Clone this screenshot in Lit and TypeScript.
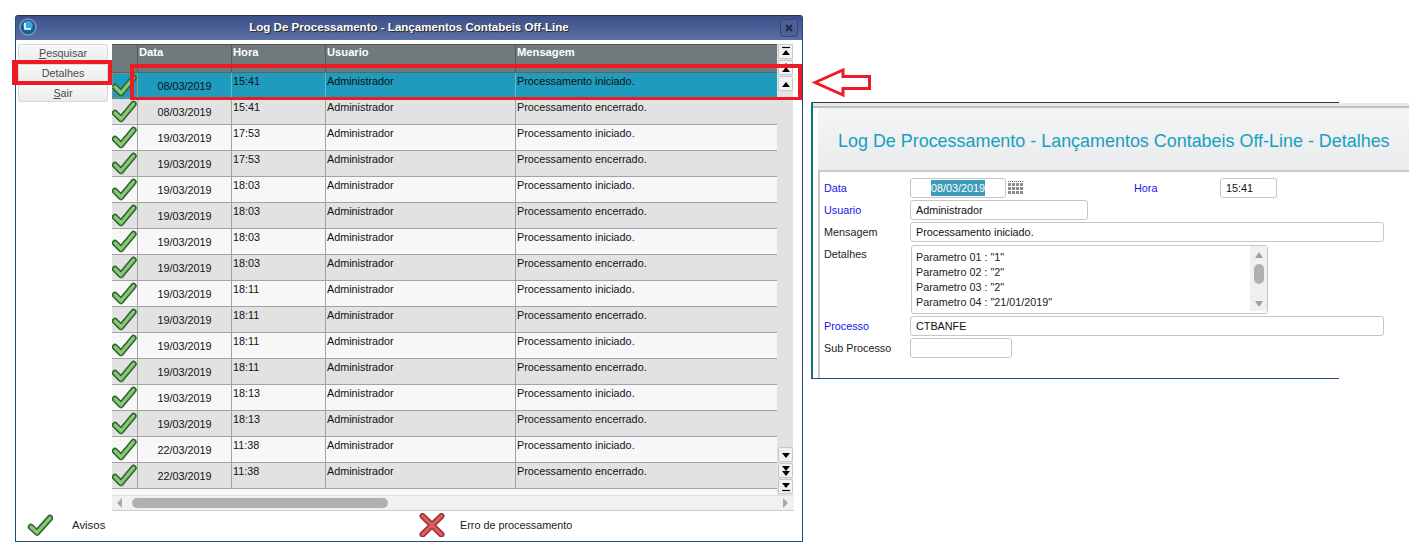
import { LitElement, html, css, svg } from "lit";
import { customElement } from "lit/decorators.js";

const rows: [string, string, string][] = [
  ["08/03/2019", "15:41", "Processamento iniciado."],
  ["08/03/2019", "15:41", "Processamento encerrado."],
  ["19/03/2019", "17:53", "Processamento iniciado."],
  ["19/03/2019", "17:53", "Processamento encerrado."],
  ["19/03/2019", "18:03", "Processamento iniciado."],
  ["19/03/2019", "18:03", "Processamento encerrado."],
  ["19/03/2019", "18:03", "Processamento iniciado."],
  ["19/03/2019", "18:03", "Processamento encerrado."],
  ["19/03/2019", "18:11", "Processamento iniciado."],
  ["19/03/2019", "18:11", "Processamento encerrado."],
  ["19/03/2019", "18:11", "Processamento iniciado."],
  ["19/03/2019", "18:11", "Processamento encerrado."],
  ["19/03/2019", "18:13", "Processamento iniciado."],
  ["19/03/2019", "18:13", "Processamento encerrado."],
  ["22/03/2019", "11:38", "Processamento iniciado."],
  ["22/03/2019", "11:38", "Processamento encerrado."],
];

const checkPath = "M4 14 L10 20 L22.5 5";
const check = () => html`<svg class="check" width="26" height="24" viewBox="0 0 26 24">
  <path d="${checkPath}" fill="none" stroke="#2c6632" stroke-width="6.4" stroke-linejoin="round" stroke-linecap="round"/>
  <path d="${checkPath}" fill="none" stroke="#8ac873" stroke-width="3.2" stroke-linejoin="miter" stroke-linecap="round"/>
</svg>`;

const tri = (up: boolean, y: number) =>
  up ? svg`<path d="M3 ${y + 5} L7 ${y} L11 ${y + 5}Z"/>` : svg`<path d="M3 ${y} L7 ${y + 5} L11 ${y}Z"/>`;

const sbtn = (content: unknown) =>
  html`<div class="sbtn"><svg width="14" height="14" viewBox="0 0 14 14">${content}</svg></div>`;

@customElement("app-root")
export class AppRoot extends LitElement {
  static styles = css`
    :host {
      display: block;
      position: relative;
      width: 1409px;
      height: 550px;
      background: #fff;
      overflow: hidden;
      font-family: "Liberation Sans", Arial, sans-serif;
      font-size: 10.8px;
      color: #1a1a1a;
    }
    .page { display: flex; align-items: flex-start; padding-left: 15px; gap: 8px; }
    .win {
      margin-top: 15px;
      width: 788px;
      height: 527px;
      box-sizing: border-box;
      border: 1px solid #1f4e7c;
      border-top-color: #333;
      border-radius: 3px 3px 0 0;
      display: flex;
      flex-direction: column;
      flex: none;
    }
    .title {
      height: 24px;
      flex: none;
      box-sizing: border-box;
      padding-bottom: 2px;
      background: linear-gradient(#3c4f88, #5b70a6);
      display: flex;
      align-items: center;
      justify-content: center;
      position: relative;
      color: #fff;
      font-weight: bold;
      font-size: 11.55px;
      text-shadow: 1px 1px 1px #222;
    }
    .logo { position: absolute; left: 3px; top: 2px; }
    .close {
      position: absolute;
      right: 4px;
      top: 3px;
      width: 18px;
      height: 18px;
      box-sizing: border-box;
      border: 1px solid #34477c;
      border-radius: 3px;
      background: #4d6198;
      display: flex;
      align-items: center;
      justify-content: center;
    }
    .body { display: flex; padding: 4px 0 0 2px; flex: none; height: 467px; }
    .side { width: 90px; flex: none; display: flex; flex-direction: column; gap: 2px; margin-right: 4px; }
    .btn {
      height: 18px;
      box-sizing: border-box;
      border: 1px solid #d8d8d8;
      border-radius: 2px;
      background: linear-gradient(#f8f8f8, #ececec);
      text-align: center;
      line-height: 16px;
      color: #4a4a4a;
    }
    .btn u { text-decoration: underline; }
    .gridwrap { width: 682px; flex: none; display: flex; flex-direction: column; }
    .grid { height: 451px; flex: none; display: flex; }
    .table { width: 665px; flex: none; background: #f7f7f7; }
    .head, .row { display: grid; grid-template-columns: 26px 94px 94px 190px 261px; }
    .head {
      height: 29px;
      background: #6e7a7c;
      color: #fff;
      font-weight: bold;
      font-size: 11.2px;
      border-top: 1px solid #555;
      box-sizing: border-box;
      border-bottom: 1px solid #5a6466;
    }
    .head div { border-right: 1px solid #4f5a5c; padding: 1px 0 0 1px; }
    .head div:last-child { border-right: 0; }
    .row {
      height: 26px;
      box-sizing: border-box;
      border-bottom: 1px solid #a3a3a3;
      background: #f7f7f7;
      color: #111;
      overflow: hidden;
    }
    .row:nth-child(odd) { background: #e2e2e2; }
    .row.sel { background: #1e9bbd; border-bottom-color: #1e9bbd; }
    .row .c { border-right: 1px solid #a3a3a3; padding: 2px 0 0 1px; line-height: 13px; }
    .row .c:last-child { border-right: 0; }
    .row.sel .c { border-right-color: #5fb9d2; }
    .row .ic { padding: 0; overflow: hidden; }
    .row.sel .ic { outline: 1px dotted #d9803c; outline-offset: -1px; }
    .row .d { text-align: center; padding: 7px 0 0 0; }
    .check { display: block; margin-left: -1px; margin-top: 0; }
    .vbar {
      width: 16px;
      flex: none;
      box-sizing: border-box;
      background: #e2e2e2;
      display: flex;
      flex-direction: column;
      padding-left: 1px;
      justify-content: space-between;
    }
    .vgroup { display: flex; flex-direction: column; }
    .sbtn {
      width: 15px;
      height: 15px;
      box-sizing: border-box;
      background: #f2f2f2;
      border: 1px solid #c8c8c8;
      border-radius: 2px;
      margin-bottom: 1px;
      display: flex;
      align-items: center;
      justify-content: center;
    }
    .sbtn svg { display: block; flex: none; }
    .hbar {
      height: 16px;
      background: #f1f1f1;
      border-top: 1px solid #e0e0e0;
      border-bottom: 1px solid #ccc;
      box-sizing: border-box;
      display: flex;
      align-items: center;
      gap: 9px;
      padding: 0 5px;
      flex: none;
    }
    .hthumb { width: 256px; height: 10px; border-radius: 5px; background: #b0b0b0; }
    .hspace { flex: 1; }
    .legend { display: flex; align-items: center; height: 28px; flex: none; color: #222; }
    .legend svg { display: block; flex: none; }
    .lg1 { margin-left: 11px; }
    .lt1 { margin-left: 19px; width: 347px; font-size: 11.4px; }
    .lt2 { margin-left: 15px; }

    .win2 {
      margin-top: 102px;
      width: 528px;
      height: 277px;
      box-sizing: border-box;
      border-left: 2px solid #0f6f86;
      border-bottom: 1px solid #1f4e7c;
      flex: none;
      display: flex;
      flex-direction: column;
    }
    .win2top { height: 1px; background: #333; flex: none; }
    .strip {
      height: 5px;
      width: 598px;
      box-sizing: border-box;
      background: #e6e9ea;
      border-bottom: 2px solid #bcc1c5;
      flex: none;
    }
    .banner {
      height: 64px;
      flex: none;
      margin-left: 5px;
      background: linear-gradient(#f4f5f5, #eaebed);
      border-bottom: 2px solid #c8c8c8;
      color: #16a0c2;
      font-size: 17.93px;
      display: flex;
      align-items: center;
      padding: 4px 0 0 20px;
      white-space: nowrap;
      width: 600px;
      box-sizing: border-box;
    }
    .form {
      flex: 1;
      margin-left: 5px;
      border-left: 2px solid #c8c8c8;
      padding: 6px 0 0 4px;
      color: #222;
      display: flex;
      flex-direction: column;
      gap: 2px;
    }
    .fr { display: flex; height: 20px; align-items: center; }
    .lab { width: 86px; flex: none; }
    .blue { color: #1414e6; }
    .inp {
      box-sizing: border-box;
      height: 20px;
      border: 1px solid #c6c6c6;
      border-radius: 3px;
      padding-left: 5px;
      line-height: 18px;
      background: #fff;
      color: #111;
      flex: none;
    }
    .date { width: 96px; text-align: center; padding-left: 0; }
    .date span { background: #3d9cb8; color: #fff; padding: 2px 0; }
    .cal { margin-left: 2px; display: block; flex: none; }
    .hl { margin-left: 110px; width: 86px; flex: none; }
    .time { width: 57px; }
    .usr { width: 178px; }
    .msg { width: 474px; }
    .sub { width: 102px; }
    .fr.tall { height: 69px; align-items: flex-start; margin-top: 1px; }
    .tall .lab { padding-top: 3px; }
    .area {
      box-sizing: border-box;
      width: 357px;
      height: 69px;
      margin-left: 1px;
      border: 1px solid #c6c6c6;
      border-radius: 3px;
      padding: 4px 0 0 4px;
      line-height: 15px;
      display: flex;
      justify-content: space-between;
      flex: none;
    }
    .vs {
      width: 17px;
      height: 65px;
      margin-top: -4px;
      background: #f0f0f0;
      display: flex;
      flex-direction: column;
      align-items: center;
      padding-top: 6px;
      box-sizing: border-box;
    }
    .vs svg { display: block; flex: none; }
    .vs .t { width: 10px; height: 20px; border-radius: 5px; background: #b0b0b0; margin: 6px 0 17px; flex: none; }

    .red { position: absolute; box-sizing: border-box; border: 4px solid #ed1c24; pointer-events: none; }
    .red1 { left: 12px; top: 60px; width: 100px; height: 25px; border-left-width: 6px; }
    .red2 { left: 130px; top: 64px; width: 672px; height: 36px; border-bottom-width: 3px; }
    .arrow { position: absolute; left: 812px; top: 67px; }
  `;

  render() {
    return html`
      <div class="page">
        <div class="win">
          <div class="title">
            <svg class="logo" width="18" height="18" viewBox="0 0 18 18">
              <circle cx="9" cy="9" r="8.8" fill="#8093b8"/>
              <circle cx="9" cy="9" r="7.3" fill="#155f9c"/>
              <circle cx="9" cy="7.5" r="4.6" fill="#3fa3dc"/>
              <path d="M6 5v6h6" fill="none" stroke="#fff" stroke-width="1.6"/>
            </svg>
            <span>Log De Processamento - Lançamentos Contabeis Off-Line</span>
            <div class="close">
              <svg width="8" height="8" viewBox="0 0 8 8"><path d="M1 1L7 7M7 1L1 7" stroke="#1f2a44" stroke-width="2.2"/></svg>
            </div>
          </div>
          <div class="body">
            <div class="side">
              <div class="btn"><u>P</u>esquisar</div>
              <div class="btn">Detalhes</div>
              <div class="btn"><u>S</u>air</div>
            </div>
            <div class="gridwrap">
              <div class="grid">
                <div class="table">
                  <div class="head"><div></div><div>Data</div><div>Hora</div><div>Usuario</div><div>Mensagem</div></div>
                  ${rows.map(
                    (r, i) => html`<div class="row ${i === 0 ? "sel" : ""}">
                      <div class="c ic">${check()}</div>
                      <div class="c d">${r[0]}</div>
                      <div class="c">${r[1]}</div>
                      <div class="c">Administrador</div>
                      <div class="c">${r[2]}</div>
                    </div>`
                  )}
                </div>
                <div class="vbar">
                  <div class="vgroup">
                    ${sbtn(svg`<path d="M3 2.5H11" stroke="#000" stroke-width="1.2"/>${tri(true, 5)}`)}
                    ${sbtn(svg`${tri(true, 2)}${tri(true, 6)}`)}
                    ${sbtn(tri(true, 5))}
                  </div>
                  <div class="vgroup">
                    ${sbtn(tri(false, 5))}
                    ${sbtn(svg`${tri(false, 2)}${tri(false, 7)}`)}
                    ${sbtn(svg`${tri(false, 3)}<path d="M3 10.5H11" stroke="#000" stroke-width="1.2"/>`)}
                  </div>
                </div>
              </div>
              <div class="hbar">
                <svg width="6" height="10" viewBox="0 0 6 10"><path d="M5 0V10L0 5Z" fill="#a8a8a8"/></svg>
                <div class="hthumb"></div>
                <div class="hspace"></div>
                <svg width="6" height="10" viewBox="0 0 6 10"><path d="M0 0V10L5 5Z" fill="#a8a8a8"/></svg>
              </div>
            </div>
          </div>
          <div class="legend">
            <svg class="lg1" width="26" height="24" viewBox="0 0 26 24">
              <path d="M4 14 L10 19.5 L23 5" fill="none" stroke="#2c6632" stroke-width="6.4" stroke-linecap="round" stroke-linejoin="round"/>
              <path d="M4 14 L10 19.5 L23 5" fill="none" stroke="#8ac873" stroke-width="3.2" stroke-linecap="round"/>
            </svg>
            <span class="lt1">Avisos</span>
            <svg width="26" height="24" viewBox="0 0 26 24">
              <path d="M3.5 3 L22.5 21.5 M22.5 3 L3.5 21.5" fill="none" stroke="#8f2f33" stroke-width="6" stroke-linecap="round"/>
              <path d="M3.5 3 L22.5 21.5 M22.5 3 L3.5 21.5" fill="none" stroke="#e0575c" stroke-width="3.2" stroke-linecap="round"/>
            </svg>
            <span class="lt2">Erro de processamento</span>
          </div>
        </div>
        <div class="win2">
          <div class="win2top"></div>
          <div class="strip"></div>
          <div class="banner">Log De Processamento - Lançamentos Contabeis Off-Line - Detalhes</div>
          <div class="form">
            <div class="fr">
              <span class="lab blue">Data</span>
              <div class="inp date"><span>08/03/2019</span></div>
              <svg class="cal" width="16" height="15" viewBox="0 0 16 15">
                <path d="M0 .5H16" stroke="#555" stroke-dasharray="1 1"/>
                <path d="M0 3.5H16M0 7.5H16M0 11.5H16" stroke="#8c8c8c" stroke-width="3" stroke-dasharray="3 1"/>
              </svg>
              <span class="hl blue">Hora</span>
              <div class="inp time">15:41</div>
            </div>
            <div class="fr"><span class="lab blue">Usuario</span><div class="inp usr">Administrador</div></div>
            <div class="fr"><span class="lab">Mensagem</span><div class="inp msg">Processamento iniciado.</div></div>
            <div class="fr tall">
              <span class="lab">Detalhes</span>
              <div class="area">
                <div>Parametro 01 : "1"<br />Parametro 02 : "2"<br />Parametro 03 : "2"<br />Parametro 04 : "21/01/2019"</div>
                <div class="vs">
                  <svg width="8" height="6" viewBox="0 0 8 6"><path d="M0 6L4 0L8 6Z" fill="#a0a0a0"/></svg>
                  <div class="t"></div>
                  <svg width="8" height="6" viewBox="0 0 8 6"><path d="M0 0L4 6L8 0Z" fill="#a0a0a0"/></svg>
                </div>
              </div>
            </div>
            <div class="fr"><span class="lab blue">Processo</span><div class="inp msg">CTBANFE</div></div>
            <div class="fr"><span class="lab">Sub Processo</span><div class="inp sub"></div></div>
          </div>
        </div>
      </div>
      <div class="red red1"></div>
      <div class="red red2"></div>
      <svg class="arrow" width="62" height="32" viewBox="0 0 62 32">
        <path d="M3 15.5 L31 3 V9.5 H57.5 V21.5 H31 V28 Z" fill="#fff" stroke="#ed1c24" stroke-width="3"/>
      </svg>
    `;
  }
}
